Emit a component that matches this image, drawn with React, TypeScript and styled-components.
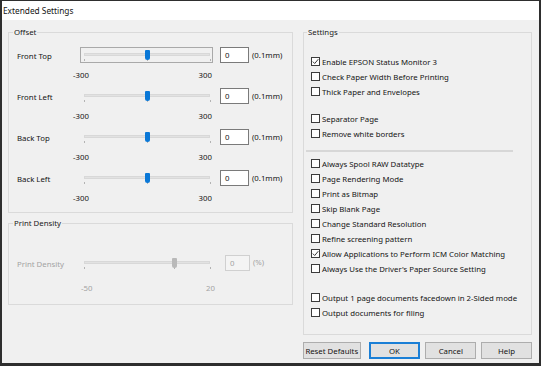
import React from "react";
import styled, { createGlobalStyle } from "styled-components";

const FONT = `"Noto Sans", "Liberation Sans", Arial, sans-serif`;

const Global = createGlobalStyle`
  html, body { margin: 0; padding: 0; background: #fff; }
  * { box-sizing: border-box; }
`;

const Window = styled.div`
  width: 541px;
  height: 366px;
  border-style: solid;
  border-color: #2e2e2e;
  border-width: 1px 2px 3px 2px;
  background: #f0f0f0;
  display: flex;
  flex-direction: column;
  font-family: ${FONT};
  font-size: 7.8px;
  color: #141414;
`;

const TitleBar = styled.div`
  height: 19px;
  flex-shrink: 0;
  background: #fff;
  display: flex;
  align-items: center;
  padding-left: 1px;
  font-size: 8.3px;
`;

const Body = styled.div`
  flex: 1;
  display: flex;
  gap: 10px;
  padding: 7px 7px 0 6px;
`;

const LeftCol = styled.div`
  width: 285px;
  display: flex;
  flex-direction: column;
  gap: 5px;
`;

const RightCol = styled.div`
  width: 229px;
  display: flex;
  flex-direction: column;
`;

const Group = styled.fieldset<{ $h: number; $pt: number; $pl: number }>`
  margin: 0;
  min-width: 0;
  height: ${(p) => p.$h}px;
  border: 1px solid #dadada;
  padding: ${(p) => p.$pt}px 6px 0 ${(p) => p.$pl}px;
`;

const Legend = styled.legend`
  padding: 0 1px;
  margin-left: -4px;
  font-size: 7.8px;
  line-height: 10px;
  color: #1a1a1a;
`;

const Stack = styled.div<{ $gap?: number; $mt?: number }>`
  display: flex;
  flex-direction: column;
  gap: ${(p) => p.$gap ?? 0}px;
  margin-top: ${(p) => p.$mt ?? 0}px;
`;

const SliderBlock = styled.div`
  display: flex;
  flex-direction: column;
`;

const ControlRow = styled.div`
  display: flex;
  align-items: center;
  height: 16px;
`;

const RowLabel = styled.div<{ $disabled?: boolean }>`
  width: 63px;
  flex-shrink: 0;
  padding-top: 2px;
  white-space: nowrap;
  color: ${(p) => (p.$disabled ? "#a3a3a3" : "#141414")};
`;

const SliderBox = styled.div<{ $focused?: boolean }>`
  position: relative;
  width: 133px;
  height: 16px;
  flex-shrink: 0;
  border: 1px solid ${(p) => (p.$focused ? "#a9a9a9" : "transparent")};
`;

const Track = styled.div`
  position: absolute;
  left: 3px;
  right: 2px;
  top: 5px;
  height: 3px;
  background: #e2e2e2;
  border: 1px solid #d8d8d8;
`;

const Thumb = styled.div<{ $disabled?: boolean }>`
  position: absolute;
  top: 2px;
  width: 5px;
  height: 10px;
  margin-left: -2px;
  border-radius: 1px 1px 2.5px 2.5px;
  background: ${(p) => (p.$disabled ? "#b9b9b9" : "#0a78d7")};
`;

const Tick = styled.div`
  position: absolute;
  bottom: 1px;
  width: 1px;
  height: 2px;
  background: #b3b3b3;
`;

const TextBox = styled.div<{ $w: number; $ml: number; $disabled?: boolean }>`
  width: ${(p) => p.$w}px;
  height: 16px;
  margin-left: ${(p) => p.$ml}px;
  flex-shrink: 0;
  border: 1px solid ${(p) => (p.$disabled ? "#d0d0d0" : "#7a7a7a")};
  background: ${(p) => (p.$disabled ? "#f4f4f4" : "#fff")};
  color: ${(p) => (p.$disabled ? "#a3a3a3" : "#141414")};
  padding-left: 4px;
  display: flex;
  align-items: center;
`;

const Unit = styled.div<{ $ml: number; $disabled?: boolean; $up?: number }>`
  margin-left: ${(p) => p.$ml}px;
  margin-top: ${(p) => -(p.$up ?? 0)}px;
  white-space: nowrap;
  color: ${(p) => (p.$disabled ? "#a3a3a3" : "#141414")};
`;

const ScaleRow = styled.div<{ $ml: number; $w: number; $mt: number; $disabled?: boolean }>`
  display: flex;
  justify-content: space-between;
  margin-left: ${(p) => p.$ml}px;
  width: ${(p) => p.$w}px;
  margin-top: ${(p) => p.$mt}px;
  height: 10px;
  line-height: 10px;
  color: ${(p) => (p.$disabled ? "#a3a3a3" : "#141414")};
`;

const CheckRow = styled.label`
  display: flex;
  align-items: center;
  height: 15px;
  gap: 2px;
  white-space: nowrap;
`;

const Box = styled.span`
  width: 9px;
  height: 9px;
  flex-shrink: 0;
  border: 1px solid #3c3c3c;
  background: #fff;
  display: flex;
  align-items: center;
  justify-content: center;
`;

const Divider = styled.div`
  height: 2px;
  width: 207px;
  margin: 9px 0 4px -5px;
  background: #d7d7d7;
`;

const ButtonRow = styled.div`
  display: flex;
  justify-content: flex-end;
  gap: 5px;
  margin-top: 7px;
`;

const Button = styled.div<{ $w: number; $default?: boolean; $mr?: number }>`
  width: ${(p) => p.$w}px;
  height: 17px;
  margin-right: ${(p) => p.$mr ?? 0}px;
  background: #e1e1e1;
  border: ${(p) => (p.$default ? "2px solid #1a7fd6" : "1px solid #adadad")};
  display: flex;
  align-items: center;
  justify-content: center;
  color: #141414;
`;

type SliderProps = {
  label: string;
  min: number;
  max: number;
  value: number;
  unit: string;
  focused?: boolean;
  disabled?: boolean;
};

const TRACK_L = 3;
const TRACK_W = 126;

const Slider = ({ label, min, max, value, unit, focused, disabled }: SliderProps) => {
  const pos = (v: number) => TRACK_L + ((v - min) / (max - min)) * TRACK_W;
  return (
    <SliderBlock>
      <ControlRow>
        <RowLabel $disabled={disabled}>{label}</RowLabel>
        <SliderBox $focused={focused}>
          <Track />
          {[min, 0, max].map((t, i) => (
            <Tick key={i} style={{ left: pos(t) }} />
          ))}
          <Thumb $disabled={disabled} style={{ left: pos(value) }} />
        </SliderBox>
        {disabled ? (
          <TextBox $w={25} $ml={12} $disabled>
            0
          </TextBox>
        ) : (
          <TextBox $w={29} $ml={7}>
            0
          </TextBox>
        )}
        <Unit $ml={3} $disabled={disabled} $up={disabled ? 2 : 0}>
          {unit}
        </Unit>
      </ControlRow>
      {disabled ? (
        <ScaleRow $ml={64} $w={134} $mt={12} $disabled>
          <span>{min}</span>
          <span>{max}</span>
        </ScaleRow>
      ) : (
        <ScaleRow $ml={56} $w={139} $mt={7}>
          <span>{min}</span>
          <span>{max}</span>
        </ScaleRow>
      )}
    </SliderBlock>
  );
};

const Check = ({ label, checked }: { label: string; checked?: boolean }) => (
  <CheckRow>
    <Box>
      {checked && (
        <svg width="7" height="7" viewBox="0 0 7 7">
          <path d="M0.8 3.6 L2.7 5.5 L6.3 1.2" fill="none" stroke="#3a3a3a" strokeWidth="1" />
        </svg>
      )}
    </Box>
    <span>{label}</span>
  </CheckRow>
);

const offsets = ["Front Top", "Front Left", "Back Top", "Back Left"];

export default function App() {
  return (
    <>
      <Global />
      <Window>
        <TitleBar>Extended Settings</TitleBar>
        <Body>
          <LeftCol>
            <Group $h={186} $pt={10} $pl={8}>
              <Legend>Offset</Legend>
              <Stack $gap={8}>
                {offsets.map((o, i) => (
                  <Slider key={o} label={o} min={-300} max={300} value={0} unit="(0.1mm)" focused={i === 0} />
                ))}
              </Stack>
            </Group>
            <Group $h={87} $pt={27} $pl={8}>
              <Legend>Print Density</Legend>
              <Slider label="Print Density" min={-50} max={20} value={0} unit="(%)" disabled />
            </Group>
          </LeftCol>
          <RightCol>
            <Group $h={308} $pt={17} $pl={7}>
              <Legend>Settings</Legend>
              <Stack>
                <Check label="Enable EPSON Status Monitor 3" checked />
                <Check label="Check Paper Width Before Printing" />
                <Check label="Thick Paper and Envelopes" />
              </Stack>
              <Stack $mt={12}>
                <Check label="Separator Page" />
                <Check label="Remove white borders" />
              </Stack>
              <Divider />
              <Stack>
                <Check label="Always Spool RAW Datatype" />
                <Check label="Page Rendering Mode" />
                <Check label="Print as Bitmap" />
                <Check label="Skip Blank Page" />
                <Check label="Change Standard Resolution" />
                <Check label="Refine screening pattern" />
                <Check label="Allow Applications to Perform ICM Color Matching" checked />
                <Check label="Always Use the Driver's Paper Source Setting" />
              </Stack>
              <Stack $mt={14}>
                <Check label="Output 1 page documents facedown in 2-Sided mode" />
                <Check label="Output documents for filing" />
              </Stack>
            </Group>
            <ButtonRow>
              <Button $w={60} $mr={3}>Reset Defaults</Button>
              <Button $w={54} $default>OK</Button>
              <Button $w={53}>Cancel</Button>
              <Button $w={53}>Help</Button>
            </ButtonRow>
          </RightCol>
        </Body>
      </Window>
    </>
  );
}
